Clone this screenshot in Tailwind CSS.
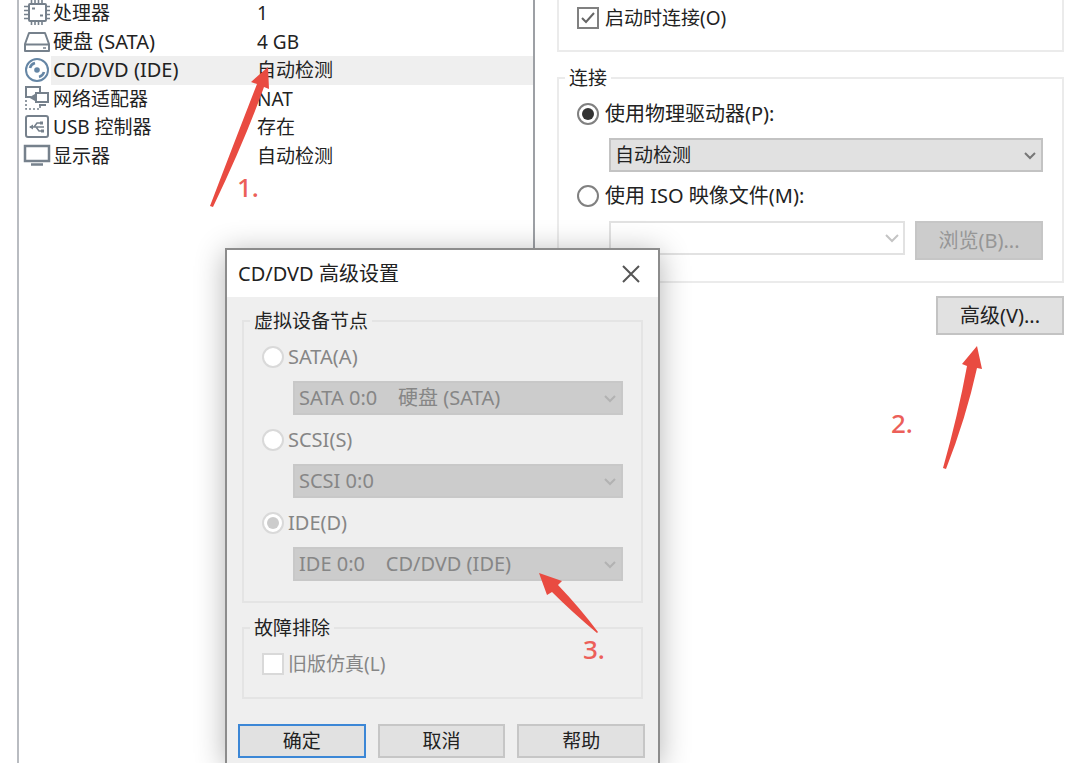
<!DOCTYPE html>
<html lang="zh-CN">
<head>
    <meta charset="UTF-8">
    <meta name="viewport" content="width=device-width, initial-scale=1.0">
    <title>虚拟机设置</title>
    <script src="https://cdn.jsdelivr.net/npm/@tailwindcss/browser@4"></script>
</head>
<body class="relative min-h-screen overflow-hidden bg-white font-['Noto_Sans','Noto_Sans_CJK_SC',sans-serif] text-[19px] leading-6 text-[#222222]">

    <div class="flex min-h-screen pl-[17px]">

        <!-- Device list -->
        <div class="w-[518px] shrink-0 border-x-2 border-l-[#b9bcc1] border-r-[#9da0a5]">
            <table class="-mt-px h-[171px] w-full border-collapse text-left">
                <tbody>
                    <tr>
                        <td class="w-8 p-0 pl-1">
                            <svg class="h-7 w-7" viewBox="0 0 28 28" fill="none" stroke="#76818c" stroke-width="2">
                                <rect x="6" y="5" width="17" height="17" rx="1"/>
                                <path d="M8.500 1v3M12 1v3M15.500 1v3M19 1v3M8.500 23v3M12 23v3M15.500 23v3M19 23v3M1 7.500h4M1 11.500h4M1 15.500h4M1 19.500h4M24 7.500h3M24 11.500h3M24 15.500h3M24 19.500h3" stroke-width="1.600"/>
                                <path d="M9 9.500h3M17 16.500h3"/>
                            </svg>
                        </td>
                        <th scope="row" class="w-[204px] p-0 pl-0.5 font-normal whitespace-nowrap">处理器</th>
                        <td class="p-0 pl-0.5">1</td>
                    </tr>
                    <tr>
                        <td class="w-8 p-0 pl-1">
                            <svg class="h-7 w-7" viewBox="0 0 28 28" fill="none" stroke="#76818c" stroke-width="2">
                                <path d="M6 5h16l4 11v7H2v-7zM2 16.500h24" stroke-linejoin="round"/>
                                <path d="M20 20h3" stroke-width="1.500"/>
                            </svg>
                        </td>
                        <th scope="row" class="p-0 pl-0.5 text-[20px] font-normal whitespace-nowrap">硬盘 (SATA)</th>
                        <td class="p-0 pl-0.5">4 GB</td>
                    </tr>
                    <tr>
                        <td class="w-8 p-0 pl-1">
                            <svg class="h-7 w-7" viewBox="0 0 28 28" fill="none" stroke="#6586a5" stroke-width="2">
                                <circle cx="14" cy="14" r="11"/>
                                <circle cx="14" cy="14" r="2.800" fill="#6586a5" stroke="none"/>
                                <path d="M7 12a7 7 0 0 1 5-5M21 16a7 7 0 0 1-5 5" stroke-width="2.600"/>
                            </svg>
                        </td>
                        <th scope="row" class="bg-[#efefef] p-0 pl-0.5 text-[20px] font-normal whitespace-nowrap">CD/DVD (IDE)</th>
                        <td class="bg-[#efefef] p-0 pl-0.5">自动检测</td>
                    </tr>
                    <tr>
                        <td class="w-8 p-0 pl-1">
                            <svg class="h-7 w-7" viewBox="0 0 28 28" fill="none" stroke="#76818c" stroke-width="2">
                                <path d="M8 12H3V2h14v5"/>
                                <path d="M13 8h12v9H13zM16 20h7"/>
                                <path d="M12 9v7l-6-3.500z" fill="#76818c" stroke="none"/>
                                <path d="M3 15v9h14v-4" stroke-width="1.600" stroke-dasharray="2 2"/>
                            </svg>
                        </td>
                        <th scope="row" class="p-0 pl-0.5 font-normal whitespace-nowrap">网络适配器</th>
                        <td class="p-0 pl-0.5">NAT</td>
                    </tr>
                    <tr>
                        <td class="w-8 p-0 pl-1">
                            <svg class="h-7 w-7" viewBox="0 0 28 28" fill="none" stroke="#76818c" stroke-width="2">
                                <rect x="3" y="3" width="22" height="21" rx="2"/>
                                <path d="M7 14h14M11 14l3-4h4M13 14l3 4h3" stroke-width="1.500"/>
                                <path d="M6 14l4-2.500v5zM17 8.500h3v3h-3zM18 16.500h3v3h-3z" fill="#76818c" stroke="none"/>
                            </svg>
                        </td>
                        <th scope="row" class="p-0 pl-0.5 font-normal whitespace-nowrap">USB 控制器</th>
                        <td class="p-0 pl-0.5">存在</td>
                    </tr>
                    <tr>
                        <td class="w-8 p-0 pl-1">
                            <svg class="h-7 w-7" viewBox="0 0 28 28" fill="none" stroke="#76818c" stroke-width="2.500">
                                <path d="M2 4h24v15H2zM8 22.500h12"/>
                            </svg>
                        </td>
                        <th scope="row" class="p-0 pl-0.5 font-normal whitespace-nowrap">显示器</th>
                        <td class="p-0 pl-0.5">自动检测</td>
                    </tr>
                </tbody>
            </table>
        </div>

        <!-- CD/DVD settings -->
        <div class="flex min-w-0 flex-1 flex-col pr-4 pl-[22px]">
            <div class="border-2 border-t-0 border-[#ebebeb] px-[18px] pt-1.5 pb-5">
                <label class="flex items-center gap-1.5">
                    <span class="grid">
                        <input type="checkbox" checked class="col-start-1 row-start-1 size-[22px] appearance-none border-2 border-[#808080] bg-white">
                        <svg class="pointer-events-none col-start-1 row-start-1 size-[22px]" viewBox="0 0 22 22" fill="none" stroke="#666666" stroke-width="2"><path d="M5 11l4 4 8-9"/></svg>
                    </span>
                    启动时连接(O)
                </label>
            </div>

            <fieldset class="mt-3.5 min-w-0 border-2 border-[#ebebeb] pr-[19px] pb-[21px] pl-[18px]">
                <legend class="-ml-3 px-1">连接</legend>
                <label class="mt-3 flex items-center gap-1.5 text-[20px]">
                    <span class="grid">
                        <input type="radio" name="source" checked class="col-start-1 row-start-1 size-[22px] appearance-none rounded-full border-2 border-[#808080] bg-white">
                        <span class="pointer-events-none col-start-1 row-start-1 size-3 place-self-center rounded-full bg-[#333333]"></span>
                    </span>
                    使用物理驱动器(P):
                </label>
                <div class="mt-3 ml-8 grid">
                    <select aria-label="物理驱动器" class="col-start-1 row-start-1 h-[34px] w-full appearance-none border-2 border-[#c3c3c3] bg-[#e1e1e1] pl-1">
                        <option>自动检测</option>
                    </select>
                    <svg class="pointer-events-none col-start-1 row-start-1 mr-1.5 h-3 w-3.5 self-center justify-self-end" viewBox="0 0 14 12" fill="none" stroke="#777777" stroke-width="2"><path d="M2 4l5 5 5-5"/></svg>
                </div>
                <label class="mt-3 flex items-center gap-1.5 text-[20px]">
                    <input type="radio" name="source" class="size-[22px] appearance-none rounded-full border-2 border-[#808080] bg-white">
                    使用 ISO 映像文件(M):
                </label>
                <div class="mt-[13px] ml-8 flex items-start gap-2.5">
                    <div class="grid flex-1">
                        <select aria-label="ISO 映像文件" disabled class="col-start-1 row-start-1 h-[34px] w-full appearance-none border-2 border-[#e2e2e2] bg-white pl-1 opacity-100">
                            <option></option>
                        </select>
                        <svg class="pointer-events-none col-start-1 row-start-1 mr-1.5 h-3 w-3.5 self-center justify-self-end" viewBox="0 0 14 12" fill="none" stroke="#c4c4c4" stroke-width="2"><path d="M1 3l6 6 6-6"/></svg>
                    </div>
                    <button type="button" disabled class="h-[39px] w-32 border-2 border-[#c6c6c6] bg-[#cccccc] text-[20px] text-[#969696]">浏览(B)...</button>
                </div>
            </fieldset>

            <button type="button" class="mt-[13px] h-[39px] w-32 self-end border-2 border-[#c3c3c3] bg-[#e1e1e1] text-[20px]">高级(V)...</button>
        </div>
    </div>

    <!-- Advanced settings dialog -->
    <div role="dialog" aria-labelledby="dialogTitle" class="absolute top-[248px] bottom-0 left-[225px] w-[435px] border-2 border-b-0 border-[#8c8c8c] bg-[#efefef] shadow-[0_4px_28px_rgba(0,0,0,0.3)]">
        <div class="flex h-[47px] items-center justify-between bg-white pr-[18px] pl-[11px]">
            <h1 id="dialogTitle" class="text-[20px]">CD/DVD 高级设置</h1>
            <button type="button" aria-label="关闭">
                <svg class="size-[18px]" viewBox="0 0 18 18" fill="none" stroke="#555555" stroke-width="2"><path d="M1 1l16 16M17 1L1 17"/></svg>
            </button>
        </div>

        <div class="pt-3 pr-[13px] pl-[11px]">
            <fieldset class="mr-0.5 ml-1 min-w-0 border-2 border-[#e4e4e4] pr-[18px] pb-5 pl-[18px] text-[20px] text-[#868686]">
                <legend class="-ml-3 px-1 text-[19px] text-[#222222]">虚拟设备节点</legend>
                <label class="mt-3 flex items-center gap-1">
                    <input type="radio" name="node" disabled class="size-[22px] appearance-none rounded-full border-2 border-[#d9d9d9] bg-white">
                    SATA(A)
                </label>
                <div class="mt-3 ml-[31px] grid">
                    <select aria-label="SATA 节点" disabled class="col-start-1 row-start-1 h-[34px] w-full appearance-none border-2 border-[#c8c8c8] bg-[#cccccc] pl-1 opacity-100">
                        <option>SATA 0:0&nbsp;&nbsp;&nbsp;&nbsp;硬盘 (SATA)</option>
                    </select>
                    <svg class="pointer-events-none col-start-1 row-start-1 mr-1.5 h-3 w-3.5 self-center justify-self-end" viewBox="0 0 14 12" fill="none" stroke="#b2b2b2" stroke-width="2"><path d="M2 4l5 5 5-5"/></svg>
                </div>
                <label class="mt-[13px] flex items-center gap-1">
                    <input type="radio" name="node" disabled class="size-[22px] appearance-none rounded-full border-2 border-[#d9d9d9] bg-white">
                    SCSI(S)
                </label>
                <div class="mt-3 ml-[31px] grid">
                    <select aria-label="SCSI 节点" disabled class="col-start-1 row-start-1 h-[34px] w-full appearance-none border-2 border-[#c8c8c8] bg-[#cccccc] pl-1 opacity-100">
                        <option>SCSI 0:0</option>
                    </select>
                    <svg class="pointer-events-none col-start-1 row-start-1 mr-1.5 h-3 w-3.5 self-center justify-self-end" viewBox="0 0 14 12" fill="none" stroke="#b2b2b2" stroke-width="2"><path d="M2 4l5 5 5-5"/></svg>
                </div>
                <label class="mt-[13px] flex items-center gap-1">
                    <span class="grid">
                        <input type="radio" name="node" checked disabled class="col-start-1 row-start-1 size-[22px] appearance-none rounded-full border-2 border-[#d9d9d9] bg-white">
                        <span class="pointer-events-none col-start-1 row-start-1 size-3 place-self-center rounded-full bg-[#cccccc]"></span>
                    </span>
                    IDE(D)
                </label>
                <div class="mt-3 ml-[31px] grid">
                    <select aria-label="IDE 节点" disabled class="col-start-1 row-start-1 h-[34px] w-full appearance-none border-2 border-[#c8c8c8] bg-[#cccccc] pl-1 opacity-100">
                        <option>IDE 0:0&nbsp;&nbsp;&nbsp;&nbsp;CD/DVD (IDE)</option>
                    </select>
                    <svg class="pointer-events-none col-start-1 row-start-1 mr-1.5 h-3 w-3.5 self-center justify-self-end" viewBox="0 0 14 12" fill="none" stroke="#b2b2b2" stroke-width="2"><path d="M2 4l5 5 5-5"/></svg>
                </div>
            </fieldset>

            <fieldset class="mt-[13px] mr-0.5 ml-1 min-w-0 border-2 border-[#e4e4e4] pb-[21px] pl-[18px] text-[#868686]">
                <legend class="-ml-3 px-1 text-[#222222]">故障排除</legend>
                <label class="mt-3 flex items-center gap-1">
                    <input type="checkbox" disabled class="size-[22px] appearance-none border-2 border-[#d9d9d9] bg-white">
                    旧版仿真(L)
                </label>
            </fieldset>

            <div class="mt-[25px] flex gap-3">
                <button type="button" class="h-[34px] flex-1 border-2 border-[#3c87d6] bg-[#e1e1e1]">确定</button>
                <button type="button" class="h-[34px] flex-1 border-2 border-[#c6c6c6] bg-[#e1e1e1]">取消</button>
                <button type="button" class="h-[34px] flex-1 border-2 border-[#c6c6c6] bg-[#e1e1e1]">帮助</button>
            </div>
        </div>
    </div>

    <!-- Step arrows and numbers -->
    <svg class="pointer-events-none absolute top-0 left-0" width="1080" height="763" viewBox="0 0 1080 763" fill="#e94b41">
        <path d="M268 67L251 82L257 84Q236 138 210 206L213 207Q245 140 264 87L269 89Z"/>
        <path d="M977 346L962 364L967 366Q958 415 943 468L946 469Q966 418 977 368L982 369Z"/>
        <path d="M539 573L547 595L552 592Q572 612 597 633L598 632Q580 608 558 585L562 581Z"/>
        <g fill="#ec5f59" font-size="26" font-weight="500">
            <text x="237" y="197">1.</text>
            <text x="891" y="433">2.</text>
            <text x="583" y="659">3.</text>
        </g>
    </svg>
</body>
</html>
